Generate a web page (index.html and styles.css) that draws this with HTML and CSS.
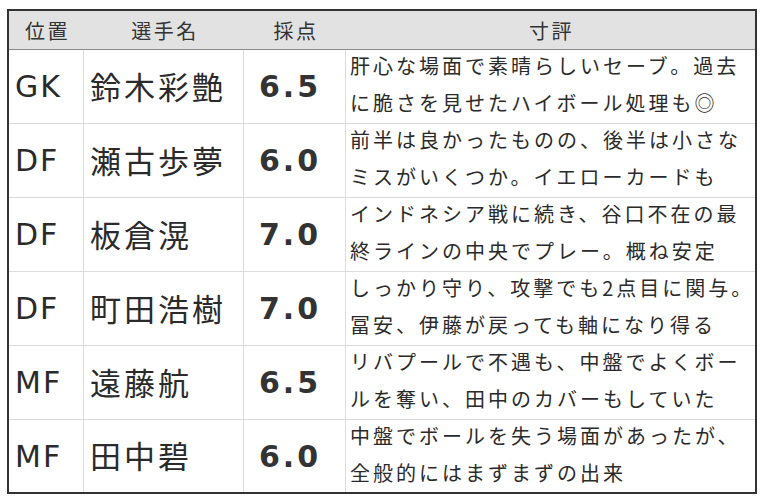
FILE: index.html
```html
<!DOCTYPE html>
<html lang="ja">
<head>
<meta charset="utf-8">
<link rel="stylesheet" href="styles.css">
</head>
<body>
<div class="sheet">
  <div class="row head">
    <div class="cell">位置</div>
    <div class="cell">選手名</div>
    <div class="cell">採点</div>
    <div class="cell">寸評</div>
  </div>
  <div class="row">
    <div class="cell pos">GK</div>
    <div class="cell name">鈴木彩艶</div>
    <div class="cell score">6.5</div>
    <div class="cell note"><span class="line">肝心な場面で素晴らしいセーブ。過去</span><span class="line">に脆さを見せたハイボール処理も◎</span></div>
  </div>
  <div class="row">
    <div class="cell pos">DF</div>
    <div class="cell name">瀬古歩夢</div>
    <div class="cell score">6.0</div>
    <div class="cell note"><span class="line">前半は良かったものの、後半は小さな</span><span class="line">ミスがいくつか。イエローカードも</span></div>
  </div>
  <div class="row">
    <div class="cell pos">DF</div>
    <div class="cell name">板倉滉</div>
    <div class="cell score">7.0</div>
    <div class="cell note"><span class="line">インドネシア戦に続き、谷口不在の最</span><span class="line">終ラインの中央でプレー。概ね安定</span></div>
  </div>
  <div class="row">
    <div class="cell pos">DF</div>
    <div class="cell name">町田浩樹</div>
    <div class="cell score">7.0</div>
    <div class="cell note"><span class="line">しっかり守り、攻撃でも2点目に関与。</span><span class="line">冨安、伊藤が戻っても軸になり得る</span></div>
  </div>
  <div class="row">
    <div class="cell pos">MF</div>
    <div class="cell name">遠藤航</div>
    <div class="cell score">6.5</div>
    <div class="cell note"><span class="line">リバプールで不遇も、中盤でよくボー</span><span class="line">ルを奪い、田中のカバーもしていた</span></div>
  </div>
  <div class="row last">
    <div class="cell pos">MF</div>
    <div class="cell name">田中碧</div>
    <div class="cell score">6.0</div>
    <div class="cell note"><span class="line">中盤でボールを失う場面があったが、</span><span class="line">全般的にはまずまずの出来</span></div>
  </div>
</div>
</body>
</html>
```

FILE: styles.css
```css
html, body {
  margin: 0;
  padding: 0;
  background: #ffffff;
}
body {
  padding: 9px 0 0 7px;
  font-family: "Noto Sans CJK JP", "DejaVu Sans", sans-serif;
  color: #2a2a2a;
}
.sheet {
  box-sizing: border-box;
  width: 750px;
  border: 2px solid #333333;
}
.row {
  display: grid;
  grid-template-columns: 75px 160px 102px 409px;
  height: 74px;
  border-bottom: 1px solid #dcdcdc;
  box-sizing: border-box;
}
.row.last {
  border-bottom: none;
  height: 72px;
}
.row.head {
  height: 39px;
  background: #e2e2e2;
  border-bottom: 1px solid #8a8a8a;
}
.cell {
  box-sizing: border-box;
  border-right: 1px solid #dcdcdc;
  display: flex;
  align-items: center;
  white-space: nowrap;
}
.cell:last-child {
  border-right: none;
}
.head .cell {
  border-right: none;
  justify-content: center;
  font-size: 20px;
  letter-spacing: 2.5px;
  color: #333333;
  padding-left: 2px;
}
.pos {
  font-family: "DejaVu Sans", sans-serif;
  font-size: 30px;
  letter-spacing: 2px;
  padding-left: 6px;
}
.name {
  font-size: 31px;
  letter-spacing: 3px;
  padding-left: 6px;
  padding-bottom: 3px;
}
.score {
  font-family: "DejaVu Sans", sans-serif;
  font-weight: bold;
  font-size: 30px;
  letter-spacing: 3px;
  color: #333333;
  padding-left: 15px;
}
.note {
  flex-direction: column;
  align-items: flex-start;
  justify-content: flex-start;
  gap: 7px;
  font-size: 20px;
  letter-spacing: 3px;
  padding-left: 4px;
  padding-top: 1px;
}
.line {
  display: block;
  line-height: 30px;
}
```
